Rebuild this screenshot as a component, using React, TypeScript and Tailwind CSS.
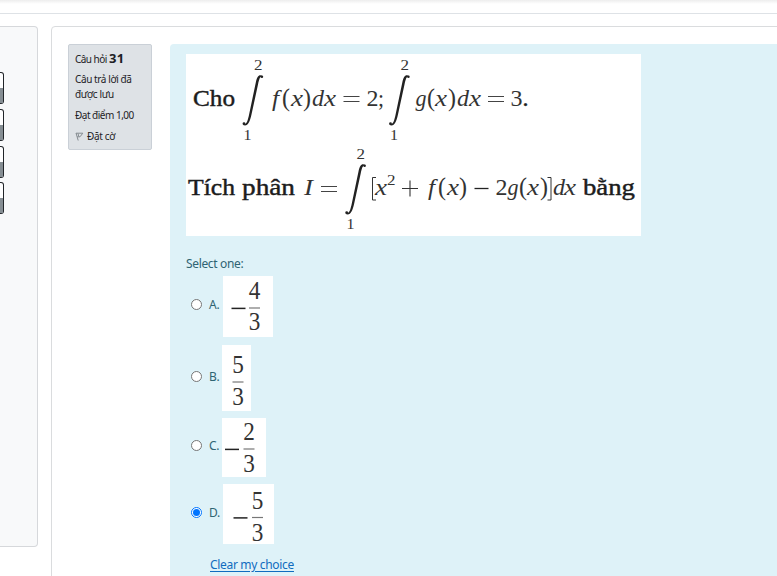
import React from 'react';

type GlyphProps = { x: number; y: number; w: number; s?: number; i?: boolean; b?: boolean; children: string };

function G({ x, y, w, s = 23.5, i, b, children }: GlyphProps) {
  return (
    <text
      x={x}
      y={y}
      fontSize={s}
      textLength={w}
      lengthAdjust="spacingAndGlyphs"
      fontStyle={i ? 'italic' : 'normal'}
      stroke={b ? '#1c1c1c' : 'none'}
      strokeWidth={b ? 0.45 : 0}
      fill={b ? '#1c1c1c' : '#333'}
    >
      {children}
    </text>
  );
}

function Integral({ x, y }: { x: number; y: number }) {
  return (
    <g transform={`translate(${x} ${y})`} fill="#222">
      <path d="M20.6 1.2C17.5-1 15.2.6 13.8 7.5L7.3 38.5C5.6 46.5 4.6 49.6 1.6 49.2L1 50C5.5 51.8 7.6 48 9.6 39L16 9.5C17.4 3 18.3 1 20.2 2Z" />
      <circle cx="2" cy="48.7" r="1.4" />
      <circle cx="19.9" cy="1.7" r="1.3" />
    </g>
  );
}

function Equals({ x, y }: { x: number; y: number }) {
  return <path d={`M${x} ${y - 9.5}h16M${x} ${y - 4.5}h16`} stroke="#444" strokeWidth="1.1" />;
}

function Formula() {
  return (
    <svg className="block h-[182px] w-[455px] bg-white font-['Liberation_Serif',serif]" viewBox="186 54 455 182">
      <G x={193} y={106} w={42} s={24} b>Cho</G>
      <G x={254} y={70} w={8.5} s={15.5}>2</G>
      <Integral x={242} y={75} />
      <G x={243.5} y={139.5} w={8} s={15.5}>1</G>
      <G x={272} y={106} w={7} i>f</G>
      <G x={282} y={106} w={8} s={26}>(</G>
      <G x={291} y={106} w={12} s={24} i>x</G>
      <G x={303} y={106} w={8} s={26}>)</G>
      <G x={312} y={106} w={12} i>d</G>
      <G x={324} y={106} w={12} s={24} i>x</G>
      <Equals x={343.5} y={106} />
      <G x={366.5} y={106} w={12}>2</G>
      <G x={378} y={106} w={6}>;</G>
      <G x={400.5} y={70} w={8.5} s={15.5}>2</G>
      <Integral x={388.5} y={75} />
      <G x={390} y={139.5} w={8} s={15.5}>1</G>
      <G x={415.5} y={106} w={11} i>g</G>
      <G x={427} y={106} w={8} s={26}>(</G>
      <G x={435} y={106} w={12} s={24} i>x</G>
      <G x={448} y={106} w={8} s={26}>)</G>
      <G x={457} y={106} w={12} i>d</G>
      <G x={469} y={106} w={12} s={24} i>x</G>
      <Equals x={488} y={106} />
      <G x={510.5} y={106} w={12}>3</G>
      <G x={522.5} y={106} w={6} b>.</G>

      <G x={188} y={195} w={47} s={24} b>Tích</G>
      <G x={242} y={195} w={53} s={24} b>phân</G>
      <G x={304} y={195} w={9} i>I</G>
      <Equals x={321} y={196} />
      <G x={356.5} y={159} w={8.5} s={15.5}>2</G>
      <Integral x={344.7} y={164} />
      <G x={346.5} y={229} w={8} s={15.5}>1</G>
      <path d="M376 177.5h-3.5v22.5h3.5" fill="none" stroke="#333" strokeWidth="1" />
      <G x={375} y={195} w={12} s={24} i>x</G>
      <G x={387} y={185} w={8.5} s={15.5}>2</G>
      <path d="M402 188.5h16M410 180.5v16" stroke="#333" strokeWidth="1.1" />
      <G x={428} y={195} w={7} i>f</G>
      <G x={438} y={195} w={8} s={26}>(</G>
      <G x={447} y={195} w={12} s={24} i>x</G>
      <G x={459} y={195} w={8} s={26}>)</G>
      <path d="M474.5 188.5h14" stroke="#222" strokeWidth="1.3" />
      <G x={495.5} y={195} w={12}>2</G>
      <G x={507.5} y={195} w={11} i>g</G>
      <G x={519} y={195} w={8} s={26}>(</G>
      <G x={527} y={195} w={12} s={24} i>x</G>
      <G x={540} y={195} w={8} s={26}>)</G>
      <path d="M547.5 177.5h3.5v22.5h-3.5" fill="none" stroke="#333" strokeWidth="1" />
      <G x={553} y={195} w={12} i>d</G>
      <G x={564} y={195} w={12} s={24} i>x</G>
      <G x={583} y={195} w={52} s={24} b>bằng</G>
    </svg>
  );
}

type FractionProps = { w: number; h: number; top: string; cx: number; y1: number; bar: number; y2: number; minus?: number };

function Fraction({ w, h, top, cx, y1, bar, y2, minus }: FractionProps) {
  return (
    <svg className="block bg-white font-['Liberation_Serif',serif]" width={w} height={h}>
      <G x={cx - 5.8} y={y1} w={11.6} s={24.5}>{top}</G>
      <path d={`M${cx - 5.5} ${bar}h11`} stroke="#777" strokeWidth="1.2" />
      <G x={cx - 5.8} y={y2} w={11.6} s={24.5}>3</G>
      {minus !== undefined && <path d={`M${minus} ${bar + 0.4}h14`} stroke="#222" strokeWidth="1.5" />}
    </svg>
  );
}

function Option({ letter, checked, children }: { letter: string; checked?: boolean; children: React.ReactNode }) {
  return (
    <label className="flex items-center">
      <span
        className={
          checked
            ? 'mb-1 flex size-[11px] items-center justify-center rounded-full border border-[#0075ff] bg-white'
            : 'mb-1 flex size-[11px] items-center justify-center rounded-full border border-[#767676] bg-white'
        }
      >
        {checked && <span className="size-[7px] shrink-0 rounded-full bg-[#0075ff]" />}
      </span>
      <span className="mb-[3px] ml-[7px] w-[14px] text-[12px] leading-4 tracking-[-0.3px] whitespace-nowrap">{letter}.</span>
      {children}
    </label>
  );
}

function NavButton() {
  return (
    <div className="flex h-8 w-1 flex-col justify-end rounded-r-[3px] border border-l-0 border-[#212529] bg-white">
      <div className="h-[15px] bg-[#868e93]" />
    </div>
  );
}

export default function App() {
  return (
    <div className="flex h-[576px] w-[777px] flex-col overflow-hidden bg-white font-['Noto_Sans','Open_Sans',sans-serif]">
      <div className="h-[14px] shrink-0 border-b border-[#dee2e6] bg-linear-to-b from-[#ededed] from-0% to-white to-30%" />
      <div className="flex min-h-0 flex-1 items-start pt-3">
        <aside className="flex h-[521px] w-[38px] shrink-0 flex-col rounded-r-[4px] border border-l-0 border-[#d6d8db] bg-[#f8f9fa] pt-[45px]">
          <div className="flex flex-col gap-[5px]">
            <NavButton />
            <NavButton />
            <NavButton />
            <div className="-mt-px"><NavButton /></div>
          </div>
        </aside>
        <main className="ml-[13px] flex h-[560px] w-[740px] shrink-0 items-start rounded-tl-[4px] border border-[#dadcde] bg-white pt-[17px] pl-4">
          <section className="h-[106px] w-[84px] shrink-0 rounded-[2px] border border-[#cad0d7] bg-[#dee2e6] pl-[6px] text-[10px] text-[#1d2125]">
            <div className="flex h-[26px] items-baseline gap-[3px] pt-1 leading-[19px] whitespace-nowrap">
              <span className="w-[31px] tracking-[-0.55px]">Câu hỏi</span>
              <b className="text-[13px] tracking-[0.2px]">31</b>
            </div>
            <div className="h-[37px] pt-px leading-[15px] tracking-[-0.4px] whitespace-nowrap">
              Câu trả lời đã<br />được lưu
            </div>
            <div className="h-[21px] leading-[15px] tracking-[-0.5px] whitespace-nowrap">Đạt điểm 1,00</div>
            <div className="flex items-center gap-[3px] leading-[15px] tracking-[-0.35px]">
              <svg className="size-[9px]" viewBox="0 0 9 9" fill="none" stroke="#858b90" strokeWidth="1">
                <path d="M1 1l2.2 7.5M1 1.2h6.8L5 4.8H2.2M3 1.5l.8 3" />
              </svg>
              <span>Đặt cờ</span>
            </div>
          </section>
          <section className="ml-[18px] flex h-[540px] w-[620px] shrink-0 flex-col items-start rounded-tl-[4px] bg-[#def2f8] pt-[10px] pl-4 text-[#2f6473]">
            <Formula />
            <div className="mt-[19px] h-[21px] text-[12px] leading-[18px] tracking-[-0.35px]">Select one:</div>
            <div className="flex flex-col items-start pl-[5px]">
              <Option letter="A"><Fraction w={50} h={61} top="4" cx={31.5} y1={23} bar={32} y2={53.5} minus={8.5} /></Option>
              <div className="mt-2"><Option letter="B"><span className="-ml-px"><Fraction w={29} h={66} top="5" cx={16} y1={27.5} bar={37} y2={60} /></span></Option></div>
              <div className="mt-[7px]"><Option letter="C"><span className="-ml-px"><Fraction w={44} h={59} top="2" cx={27} y1={22} bar={31} y2={53.5} minus={3} /></span></Option></div>
              <div className="mt-[7px]"><Option letter="D" checked><Fraction w={51} h={60} top="5" cx={34.5} y1={24.5} bar={33.5} y2={56.5} minus={10.5} /></Option></div>
            </div>
            <a className="mt-[12px] ml-6 text-[12px] leading-[18px] tracking-[-0.32px] whitespace-nowrap text-[#0f6cbf] underline underline-offset-2">Clear my choice</a>
          </section>
        </main>
      </div>
    </div>
  );
}
